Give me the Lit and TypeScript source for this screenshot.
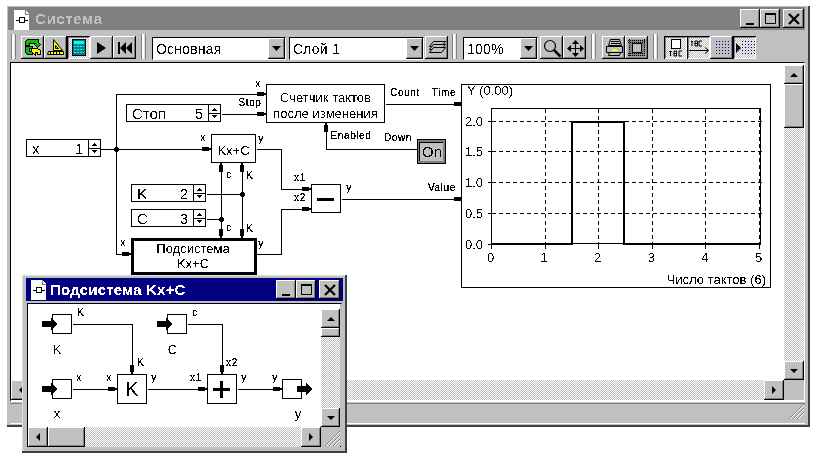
import { LitElement, html, svg, css } from 'lit';
import { customElement } from 'lit/decorators.js';

type Dir = 'r' | 'd' | 'u';

// wires of the main diagram, page coordinates
const MAIN_WIRES = [
  'M264 94H116V254H123',
  'M116 149H203',
  'M221 114H258',
  'M100 149H116',
  'M206 194H242',
  'M206 219H221',
  'M221 163V238',
  'M242 163V238',
  'M385 104H455',
  'M326 131V149H417',
  'M256 149H281V189H303',
  'M256 254H281V209H303',
  'M341 199H455',
];

const MAIN_PINS: [number, number, Dir][] = [
  [266, 94, 'r'], [266, 114, 'r'], [211, 149, 'r'], [131, 254, 'r'],
  [463, 104, 'r'], [463, 199, 'r'], [311, 189, 'r'], [311, 209, 'r'],
  [221, 163, 'u'], [242, 163, 'u'], [221, 238, 'd'], [242, 238, 'd'], [326, 123, 'u'],
];

const MAIN_LABELS: [number, number, string][] = [
  [258, 87, 'x'], [250, 106, 'Stop'], [203, 141, 'x'], [261, 142, 'y'],
  [229, 178, 'c'], [250, 179, 'K'], [229, 231, 'c'], [250, 232, 'K'],
  [123, 246, 'x'], [261, 247, 'y'], [405, 96, 'Count'], [444, 96, 'Time'],
  [351, 139, 'Enabled'], [398, 141, 'Down'], [300, 181, 'x1'], [300, 201, 'x2'],
  [349, 191, 'y'], [442, 191, 'Value'],
];

const SUB_WIRES = [
  'M72 324H132V366', 'M187 324H222V366',
  'M72 389H109', 'M147 389H199', 'M237 389H274',
];

const SUB_LABELS: [number, number, string][] = [
  [81, 316, 'K'], [195, 316, 'c'], [79, 381, 'x'], [109, 381, 'x'], [154, 381, 'y'],
  [141, 366, 'K'], [196, 381, 'x1'], [232, 366, 'x2'], [244, 381, 'y'], [275, 381, 'y'],
];

const XS = [491, 544.6, 598.2, 651.8, 705.4, 759];
const YS = [244, 213, 182, 151, 121];

function pin(x: number, y: number, d: Dir) {
  if (d === 'r') return svg`<path d="M${x - 9} ${y - 2}h7v1h2v2h-2v1h-7z" />`;
  if (d === 'u') return svg`<path d="M${x - 2} ${y + 9}v-7h1v-2h2v2h1v7z" />`;
  return svg`<path d="M${x - 2} ${y - 9}v7h1v2h2v-2h1v-7z" />`;
}

function dot(x: number, y: number) {
  return svg`<rect x=${x - 1} y=${y - 2} width="3" height="5" /><rect x=${x - 2} y=${y - 1} width="5" height="3" />`;
}

function spin(x: number, y: number, w: number, sep: number, name: string, value: string) {
  const r = x + sep;
  return svg`
    <rect class="box" x=${x + 0.5} y=${y + 0.5} width=${w - 1} height="17" />
    <path class="wire" d="M${r + 0.5} ${y}v18M${r} ${y + 9.5}h${w - sep}" />
    <path d="M${r + 6} ${y + 4}h1v1h1v1h1v1h-5v-1h1v-1h1zM${r + 4} ${y + 11}h5v1h-1v1h-1v1h-1v-1h-1v-1h-1z" />
    <text class="t15" x=${x + 6} y=${y + 15}>${name}</text>
    <text class="t15 end" x=${r - 5} y=${y + 15}>${value}</text>
  `;
}

function block(x: number, y: number, w: number, h: number) {
  return svg`<rect class="box" x=${x + 0.5} y=${y + 0.5} width=${w - 1} height=${h - 1} />`;
}

function bigArrow(x: number, y: number) {
  return svg`<path d="M${x} ${y - 3}h9v-4l6 7 -6 7v-4h-9z" />`;
}

function mainDiagram() {
  return svg`
    <svg class="diagram" width="773" height="317" viewBox="11 63 773 317">
      <path class="wire" transform="translate(.5 .5)" d=${MAIN_WIRES.join('')} />
      ${MAIN_PINS.map(([x, y, d]) => pin(x, y, d))}
      ${dot(116, 149)}${dot(242, 194)}${dot(221, 219)}
      ${spin(26, 139, 75, 62, 'x', '1')}
      ${spin(126, 104, 95, 82, 'Стоп', '5')}
      ${spin(131, 184, 75, 62, 'K', '2')}
      ${spin(131, 209, 75, 62, 'C', '3')}
      ${block(211, 134, 45, 29)}
      ${block(266, 84, 119, 39)}
      ${block(311, 184, 30, 29)}
      <rect class="box thick" x="132" y="239" width="123" height="34" />
      <rect x="317" y="198" width="17" height="3" />
      <text class="t13 mid" x="233.5" y="155">Kx+C</text>
      <text class="t13 mid" x="325.5" y="102">Счетчик тактов</text>
      <text class="t13 mid" x="325.5" y="118">после изменения</text>
      <text class="t13 mid" x="193" y="253">Подсистема</text>
      <text class="t13 mid" x="193" y="268">Kx+C</text>
      ${MAIN_LABELS.map(([x, y, s]) => svg`<text class="t9 mid" x=${x} y=${y}>${s}</text>`)}

      <rect x="417" y="139" width="29" height="25" />
      <rect x="418" y="140" width="27" height="23" fill="#808080" />
      <rect x="419" y="142" width="24" height="19" fill="#c0c0c0" />
      <path class="wire" d="M419.5 161V142.5H443" />
      <text class="t15" x="422" y="157">On</text>

      <rect class="box" x="461.5" y="84.5" width="309" height="203" />
      <rect class="box" x="491.5" y="108.5" width="269" height="135" />
      <path class="grid" transform="translate(.5 .5)"
        d="${XS.slice(1).map((x) => `M${Math.round(x)} 108V244`).join('')}${YS.slice(1).map((y) => `M491 ${y}H761`).join('')}" />
      <path class="wire" transform="translate(.5 .5)"
        d="${XS.map((x) => `M${Math.round(x)} 244v4`).join('')}${YS.map((y) => `M487 ${y}h4`).join('')}" />
      <path class="trace" d="M491 244H572V122H624V244H761" />
      <text class="t13" x="467" y="95">Y (0.00)</text>
      ${YS.map((y, i) => svg`<text class="t13 end" x="483" y=${y + 5}>${(i * 0.5).toFixed(1)}</text>`)}
      ${XS.map((x, i) => svg`<text class="t13 mid" x=${x - 0.5} y="262">${i}</text>`)}
      <text class="t13 end" x="766" y="284">Число тактов (6)</text>
    </svg>
  `;
}

function subDiagram() {
  return svg`
    <svg class="diagram" width="293" height="123" viewBox="28 304 293 123">
      ${block(52, 314, 20, 20)}${block(167, 314, 20, 20)}${block(52, 379, 20, 20)}${block(282, 379, 20, 20)}
      ${block(117, 374, 30, 30)}${block(207, 374, 30, 30)}
      <path class="wire" transform="translate(.5 .5)" d=${SUB_WIRES.join('')} />
      ${pin(117, 389, 'r')}${pin(207, 389, 'r')}${pin(282, 389, 'r')}
      ${pin(132, 374, 'd')}${pin(222, 374, 'd')}
      ${bigArrow(42, 324)}${bigArrow(157, 324)}${bigArrow(42, 389)}${bigArrow(297, 389)}
      <rect x="213" y="388" width="17" height="3" /><rect x="220" y="381" width="3" height="17" />
      <text class="k" x="132" y="396">K</text>
      <text class="t13 mid" x="57" y="354">K</text>
      <text class="t13 mid" x="172.5" y="354">C</text>
      <text class="t13 mid" x="57" y="418">x</text>
      <text class="t13 mid" x="298" y="418">y</text>
      ${SUB_LABELS.map(([x, y, s]) => svg`<text class="t9 mid" x=${x} y=${y}>${s}</text>`)}
    </svg>
  `;
}

const ICONS = {
  recycle: svg`
    <g stroke="#000" shape-rendering="crispEdges">
      <path fill="#00c000" d="M1.5 6.5V2.5L3.5 .5H14.5V3.5L16.5 5.5 13.5 8.5 10.5 5.5 11.5 4.5H5.5V6.5Z" />
      <path fill="#00c000" d="M1.5 7.5H8.5V9.5H5.5V12.5H8.5V15.5H3.5L1.5 13.5Z" />
      <path fill="#ffff00" d="M7.5 9.5H13.5L16.5 11.5V15.5H13.5V13.5H11.5V16.5L7.5 12.5Z" />
    </g>`,
  ruler: svg`
    <path fill="#ffff00" stroke="#000" d="M6.5 .5V11.5H15.5Z" /><path fill="#c0c0c0" stroke="#000" d="M8.5 6.5V9.5H11.5Z" />
    <path fill="#ffff00" stroke="#000" d="M1.5 12.5H16.5V15.5H.5Z" />
    <path stroke="#000" d="M3.5 13V15M6.5 13V15M9.5 13V15M12.5 13V15" />`,
  calc: svg`
    <rect x="2.5" y=".5" width="13" height="16" fill="#008080" stroke="#000" />
    <rect x="4" y="2" width="10" height="3" fill="#00ffff" />
    <path stroke="#00ffff" stroke-dasharray="2 1" d="M4 7.5H14M4 10.5H14M4 13.5H14" />`,
  play: svg`<path d="M4 3 13 9 4 15Z" />`,
  rewind: svg`<path d="M2 3H4V15H2ZM10 3V15L4 9ZM16 3V15L10 9Z" />`,
  layers: svg`
    <g fill="#c0c0c0" stroke="#000">
      <path d="M5.5 2.5H17.5L13.5 7.5H1.5Z" /><path d="M5.5 5.5H17.5L13.5 10.5H1.5Z" /><path d="M5.5 8.5H17.5L13.5 13.5H1.5Z" />
    </g>`,
  zoom: svg`
    <circle cx="7" cy="7" r="5.5" fill="#c0c0c0" stroke="#000" stroke-width="1.2" />
    <path stroke="#000" stroke-width="2.6" d="M11 11L17.5 17.5" />`,
  move: svg`
    <path stroke="#000" d="M9.5 3V16M3 9.5H16" />
    <path d="M9.5 1 13 5H6ZM9.5 18 6 14H13ZM1 9.5 5 6V13ZM18 9.5 14 6V13Z" />`,
  printer: svg`
    <path fill="#c0c0c0" stroke="#000" d="M5.5 .5H14.5L16.5 6.5H3.5ZM1.5 7.5H17.5V13.5H1.5ZM4.5 13.5H15.5L14.5 16.5H3.5Z" />
    <path stroke="#000" d="M6 2.5H14M6 4.5H15" /><rect x="7" y="10" width="5" height="2" fill="#ffff00" />`,
  chip: svg`
    <rect x=".5" y=".5" width="17" height="17" fill="#808080" />
    <path stroke="#000" stroke-dasharray="1 1" d="M0 1.5H18M0 3.5H18M0 14.5H18M0 16.5H18M1.5 0V18M16.5 0V18" />
    <rect x="4.5" y="4.5" width="9" height="9" fill="#c0c0c0" stroke="#000" />`,
  cell: svg`
    <rect x="4.5" y=".5" width="9" height="9" fill="#fff" stroke="#000" />
    <path stroke="#000" d="M2 12.5H5M3.5 12V17M7 12V17H9.5V12ZM7 14.5H9.5M15 12H12V17H15" fill="none" />`,
  text: svg`
    <path stroke="#000" fill="none" d="M3 2.5H5M4 2V7M7 2V7H9.5V2ZM7 4.5H9.5M14 2H11V7H14M1 11.5H20M17 8.5 20.5 11.5 17 14.5" />`,
  dots: svg`
    <g fill="#000080">${Array.from({ length: 25 }, (_, i) => svg`<rect x=${3 + (i % 5) * 3} y=${2 + Math.floor(i / 5) * 3} width="1" height="1" />`)}</g>`,
  ports: svg`
    <path d="M1 4 6 9 1 14Z" />
    <g fill="#000080">${Array.from({ length: 25 }, (_, i) => svg`<rect x=${7 + (i % 5) * 3} y=${2 + Math.floor(i / 5) * 3} width="1" height="1" />`)}</g>`,
};

const icon = (body: unknown, w = 18, h = 18) =>
  html`<svg class="ico" width=${w} height=${h} viewBox="0 0 ${w} ${h}">${body}</svg>`;

@customElement('app-root')
export class AppRoot extends LitElement {
  static styles = css`
    :host {
      display: block;
      position: relative;
      width: 813px;
      height: 460px;
      overflow: hidden;
      background: #fff;
      font-family: 'Liberation Sans', Arial, sans-serif;
    }
    .defs { position: absolute; width: 0; height: 0; }
    .window {
      position: absolute;
      box-sizing: border-box;
      display: flex;
      flex-direction: column;
      background: #c0c0c0;
      border-right: 2px solid #404040;
      border-bottom: 2px solid #404040;
    }
    .main { left: 7px; top: 6px; width: 803px; height: 421px; padding: 1px 3px 1px 1px; }
    .sub { left: 22px; top: 275px; width: 325px; height: 178px; padding: 3px 2px 0 4px; box-shadow: inset 1px 1px 0 #dfdfdf; }

    .title {
      flex: none;
      height: 23px;
      display: flex;
      align-items: center;
      padding-right: 1px;
      background: #808080;
      color: #c0c0c0;
      font-size: 15px;
      font-weight: 700;
      letter-spacing: 0.6px;
    }
    .sub .title { background: #000080; color: #fff; padding-right: 3px; letter-spacing: 0.2px; }
    .title-icon { margin: 2px 5px 0 6px; flex: none; }
    .sub .title-icon { margin: 0 3px 0 5px; }
    .title-text { flex: 1; filter: url(#aa); }
    .tbtn {
      box-sizing: border-box;
      width: 20px;
      height: 19px;
      display: flex;
      align-items: center;
      justify-content: center;
    }
    .tbtn.gap { margin-left: 3px; width: 21px; }

    .raised {
      background: #c0c0c0;
      box-shadow: inset -1px -1px 0 #000, inset 1px 1px 0 #fff, inset -2px -2px 0 #808080;
    }

    .toolbar {
      flex: none;
      height: 29px;
      margin-top: 2px;
      padding: 4px 0 0 3px;
      box-sizing: border-box;
      display: flex;
      align-items: flex-start;
    }
    .grip {
      box-sizing: border-box;
      width: 5px;
      height: 25px;
      margin-top: -2px;
      border-left: 1px solid #808080;
      border-right: 1px solid #808080;
      background: #fff;
      box-shadow: inset -1px 0 0 #dfdfdf;
    }
    .btn {
      box-sizing: border-box;
      flex: none;
      width: 23px;
      height: 23px;
      display: flex;
      align-items: center;
      justify-content: center;
    }
    .btn.on {
      background: repeating-conic-gradient(#fff 0 25%, #c0c0c0 0 50%) 0 0 / 2px 2px;
      box-shadow: inset 1px 1px 0 #000, inset -1px -1px 0 #fff, inset 2px 2px 0 #808080;
    }
    .combo {
      box-sizing: border-box;
      flex: none;
      height: 23px;
      margin-top: 1px;
      display: flex;
      background: #fff;
      border: 1px solid;
      border-color: #000 #fff #fff #000;
      font-size: 14px;
      color: #000;
    }
    .combo-text { flex: 1; padding: 3px 0 0 3px; letter-spacing: 0.2px; filter: url(#aa); }
    .combo-btn {
      box-sizing: border-box;
      flex: none;
      width: 17px;
      display: flex;
      align-items: center;
      justify-content: center;
    }

    .client {
      flex: none;
      box-sizing: border-box;
      margin-left: 2px;
      display: grid;
      background: #c0c0c0;
      border: 1px solid;
      border-color: #000 #fff #fff #000;
    }
    .main .client {
      height: 340px;
      margin-top: 1px;
      grid-template-columns: 773px 20px;
      grid-template-rows: 317px 20px;
      border-bottom-width: 2px;
    }
    .sub .client {
      height: 144px;
      margin: 2px 1px 0 1px;
      grid-template-columns: 293px 19px;
      grid-template-rows: 123px 20px;
      border-right-color: #c0c0c0;
      border-bottom: none;
      box-shadow: inset 0 -1px 0 #000;
    }
    .canvas { background: #fff; overflow: hidden; }
    .diagram { display: block; shape-rendering: crispEdges; }
    .diagram text { fill: #000; stroke: none; filter: url(#aa); }
    .diagram text.t9 { filter: url(#aa-small); }
    .wire { fill: none; stroke: #000; }
    .box { fill: #fff; stroke: #000; }
    .box.thick { stroke-width: 3; }
    .grid { fill: none; stroke: #000; stroke-dasharray: 4 3; }
    .trace { fill: none; stroke: #000; stroke-width: 2; }
    .t9 { font-size: 10px; letter-spacing: 0.6px; }
    .t13 { font-size: 13px; }
    .t15 { font-size: 15px; }
    .k { font-size: 20px; text-anchor: middle; }
    .mid { text-anchor: middle; }
    .end { text-anchor: end; }

    .vbar, .hbar {
      display: flex;
      background: repeating-conic-gradient(#fff 0 25%, #c0c0c0 0 50%) 0 0 / 2px 2px;
    }
    .vbar { flex-direction: column; }
    .sb { flex: none; display: flex; align-items: center; justify-content: center; }
    .vbar .sb { height: 19px; }
    .hbar .sb { width: 20px; }
    .track { flex: 1; }
    .pad-top { flex: none; background: #fff; }
    .corner { background: #c0c0c0; overflow: hidden; }

    .status {
      flex: none;
      position: relative;
      height: 21px;
      margin-top: 1px;
      margin-left: 2px;
      box-shadow: inset 0 1px 0 #808080, inset 0 -1px 0 #fff;
    }
    .resize { position: absolute; right: 0; bottom: 0; }
  `;

  private scrollV(pad: number, thumb: number) {
    return html`<div class="vbar">
      <div class="pad-top" style="height:${pad}px"></div>
      <div class="sb raised">${icon(svg`<path d="M4 10 8 6 12 10Z" />`, 16, 16)}</div>
      <div class="sb raised" style="height:${thumb}px"></div>
      <div class="track"></div>
      <div class="sb raised">${icon(svg`<path d="M4 6H12L8 10Z" />`, 16, 16)}</div>
    </div>`;
  }

  private scrollH(thumb: number) {
    return html`<div class="hbar">
      <div class="sb raised">${icon(svg`<path d="M10 4V12L6 8Z" />`, 16, 16)}</div>
      ${thumb ? html`<div class="sb raised" style="width:${thumb}px"></div>` : ''}
      <div class="track"></div>
      <div class="sb raised">${icon(svg`<path d="M6 4V12L10 8Z" />`, 16, 16)}</div>
    </div>`;
  }

  private titleBar(text: string) {
    return html`<div class="title">
      <svg class="title-icon" width="16" height="20" viewBox="0 0 16 20" shape-rendering="crispEdges">
        <path d="M0 0H11L15 4V20H0Z" fill="#fff" />
        <path d="M11 0V4H15" fill="none" stroke="#808080" />
        <path d="M2 10H5M11 10H14" stroke="#000" fill="none" />
        <rect x="5.5" y="7.5" width="5" height="5" fill="#fff" stroke="#000" />
      </svg>
      <span class="title-text">${text}</span>
      <div class="tbtn raised">${icon(svg`<rect x="3" y="11" width="8" height="2" />`, 14, 14)}</div>
      <div class="tbtn raised">${icon(svg`<path d="M2.5 2.5H12.5V12.5H2.5Z" fill="none" stroke="#000" /><rect x="2" y="2" width="11" height="2" />`, 15, 15)}</div>
      <div class="tbtn raised gap">${icon(svg`<path d="M2 2 12 12M12 2 2 12" stroke="#000" stroke-width="2.2" fill="none" />`, 14, 14)}</div>
    </div>`;
  }

  private combo(text: string, width: number) {
    return html`<div class="combo" style="width:${width}px">
      <span class="combo-text">${text}</span>
      <div class="combo-btn raised">${icon(svg`<path d="M2 4H11L6.5 9Z" />`, 13, 13)}</div>
    </div>`;
  }

  private btn(body: unknown, w = 18, h = 18, on = false) {
    return html`<div class="btn raised ${on ? 'on' : ''}">${icon(body, w, h)}</div>`;
  }

  render() {
    const grip = icon(
      svg`<path d="M19 4 4 19M19 8 8 19M19 12 12 19" stroke="#808080" fill="none" /><path d="M19 5 5 19M19 9 9 19M19 13 13 19" stroke="#fff" fill="none" />`,
      20,
      20,
    );
    return html`
      <svg class="defs">
        <filter id="aa" x="-5%" y="-5%" width="110%" height="110%" color-interpolation-filters="sRGB">
          <feComponentTransfer><feFuncA type="discrete" tableValues="0 1"></feFuncA></feComponentTransfer>
        </filter>
        <filter id="aa-small" x="-5%" y="-5%" width="110%" height="110%" color-interpolation-filters="sRGB">
          <feComponentTransfer><feFuncA type="discrete" tableValues="0 1 1"></feFuncA></feComponentTransfer>
        </filter>
      </svg>

      <div class="window main">
        ${this.titleBar('Система')}
        <div class="toolbar">
          <div class="grip"></div>
          <div style="width:5px"></div>
          ${this.btn(ICONS.recycle)}${this.btn(ICONS.ruler)}${this.btn(ICONS.calc, 18, 18, true)}${this.btn(ICONS.play)}${this.btn(ICONS.rewind)}
          <div style="width:5px"></div>
          <div class="grip"></div>
          <div style="width:6px"></div>
          ${this.combo('Основная', 134)}
          <div style="width:3px"></div>
          ${this.combo('Слой 1', 135)}
          <div style="width:1px"></div>
          ${this.btn(ICONS.layers)}
          <div style="width:4px"></div>
          <div class="grip"></div>
          <div style="width:6px"></div>
          ${this.combo('100%', 75)}
          <div style="width:2px"></div>
          ${this.btn(ICONS.zoom)}${this.btn(ICONS.move)}
          <div style="width:5px"></div>
          <div class="grip"></div>
          <div style="width:6px"></div>
          ${this.btn(ICONS.printer)}${this.btn(ICONS.chip)}
          <div style="width:5px"></div>
          <div class="grip"></div>
          <div style="width:6px"></div>
          ${this.btn(ICONS.cell, 18, 18, true)}${this.btn(ICONS.text, 22, 18, true)}${this.btn(ICONS.dots)}${this.btn(ICONS.ports, 20, 18, true)}
        </div>
        <div class="client">
          <div class="canvas">${mainDiagram()}</div>
          ${this.scrollV(2, 44)}
          ${this.scrollH(0)}
          <div class="corner"></div>
        </div>
        <div class="status">
          <div class="resize">${grip}</div>
        </div>
      </div>

      <div class="window sub">
        ${this.titleBar('Подсистема Kx+C')}
        <div class="client">
          <div class="canvas">${subDiagram()}</div>
          ${this.scrollV(5, 9)}
          ${this.scrollH(37)}
          <div class="corner">${grip}</div>
        </div>
      </div>
    `;
  }
}
